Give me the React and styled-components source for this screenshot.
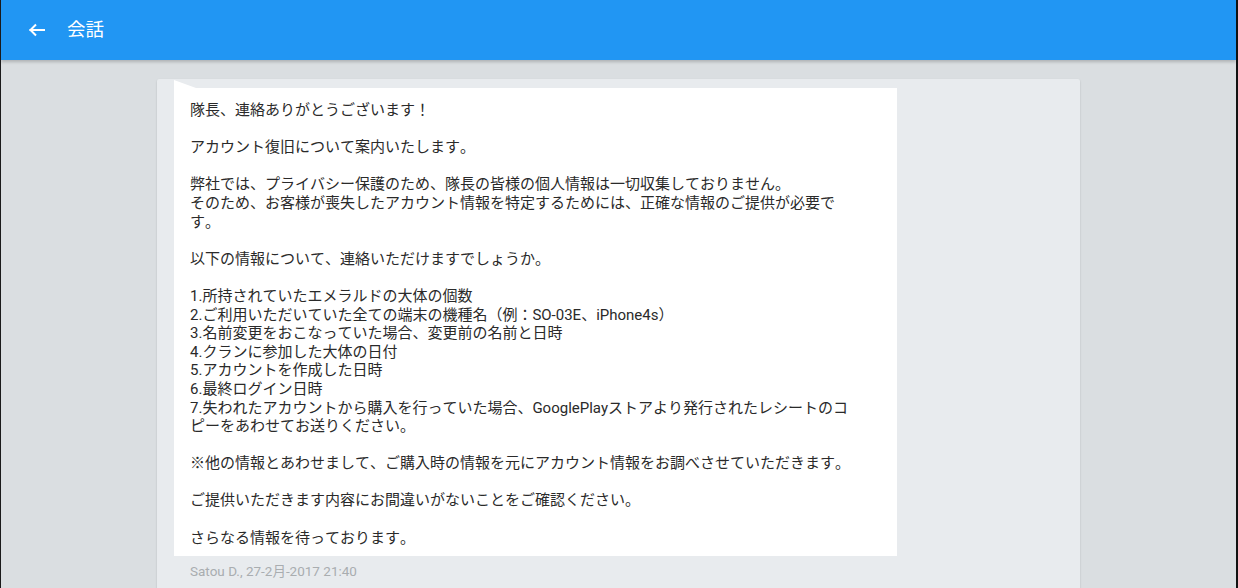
import React from "react";
import styled, { createGlobalStyle } from "styled-components";

const GlobalStyle = createGlobalStyle`
    html, body {
        margin: 0;
        padding: 0;
        height: 100%;
        overflow: hidden;
    }
    body {
        font-family: Roboto, "Noto Sans CJK JP", sans-serif;
        background: #dadee1;
    }
`

const message = `隊長、連絡ありがとうございます！

アカウント復旧について案内いたします。

弊社では、プライバシー保護のため、隊長の皆様の個人情報は一切収集しておりません。
そのため、お客様が喪失したアカウント情報を特定するためには、正確な情報のご提供が必要です。

以下の情報について、連絡いただけますでしょうか。

1.所持されていたエメラルドの大体の個数
2.ご利用いただいていた全ての端末の機種名（例：SO-03E、iPhone4s）
3.名前変更をおこなっていた場合、変更前の名前と日時
4.クランに参加した大体の日付
5.アカウントを作成した日時
6.最終ログイン日時
7.失われたアカウントから購入を行っていた場合、GooglePlayストアより発行されたレシートのコピーをあわせてお送りください。

※他の情報とあわせまして、ご購入時の情報を元にアカウント情報をお調べさせていただきます。

ご提供いただきます内容にお間違いがないことをご確認ください。

さらなる情報を待っております。`;

const BackIcon = () => (
    <svg width="18" height="18" viewBox="0 0 18 18" fill="none" stroke="#fff" strokeWidth="2" strokeLinecap="square">
        <path d="M2.5 9H16" />
        <path d="M8 3.5L2.5 9L8 14.5" strokeLinecap="butt" />
    </svg>
);

const App = () => {
    return (
        <Frame>
            <GlobalStyle />
            <Header>
                <BackButton><BackIcon /></BackButton>
                <Title>会話</Title>
            </Header>
            <Main>
                <Card>
                    <Bubble>{message}</Bubble>
                    <Meta>Satou D., 27-2月-2017 21:40</Meta>
                </Card>
            </Main>
        </Frame>
    );
};

const Frame = styled.div`
    height: 100vh;
    display: flex;
    flex-direction: column;
    border-left: 1px solid #1a1a1a;
    border-right: 2px solid #111;
    box-sizing: border-box;
    overflow: hidden;
`
const Header = styled.header`
    height: 60px;
    flex-shrink: 0;
    background: #2196f3;
    display: flex;
    align-items: center;
    padding-left: 27px;
    box-shadow: 0 2px 3px rgba(0, 0, 0, 0.2);
    position: relative;
    z-index: 1;
`
const BackButton = styled.div`
    display: flex;
    align-items: center;
    width: 18px;
    height: 18px;
    margin-right: 21px;
`
const Title = styled.h1`
    margin: 0;
    font-size: 18.5px;
    font-weight: 400;
    color: #fff;
    line-height: 1;
`
const Main = styled.main`
    flex: 1;
    display: flex;
    justify-content: center;
    padding-top: 19px;
`
const Card = styled.div`
    width: 923px;
    box-sizing: border-box;
    padding: 9px 17px 30px;
    background: #e8ebee;
    border-radius: 2px;
    box-shadow: 0 1px 2px rgba(0, 0, 0, 0.18);
`
const Bubble = styled.div`
    position: relative;
    width: 723px;
    box-sizing: border-box;
    padding: 13px 38px 9px 16px;
    background: #fff;
    color: #2a2a2a;
    font-size: 15px;
    line-height: 18.6px;
    white-space: pre-wrap;
    line-break: strict;
    font-kerning: none;
    font-feature-settings: "kern" 0, "palt" 0;

    &::before {
        content: "";
        position: absolute;
        left: 0;
        top: -8px;
        border-left: 22px solid transparent;
        border-bottom: 8px solid #fff;
        transform: scaleX(-1);
        transform-origin: 11px 0;
    }
`
const Meta = styled.div`
    margin-top: 4px;
    padding-left: 16px;
    font-size: 13.5px;
    color: #a9adb0;
`

export default App;
